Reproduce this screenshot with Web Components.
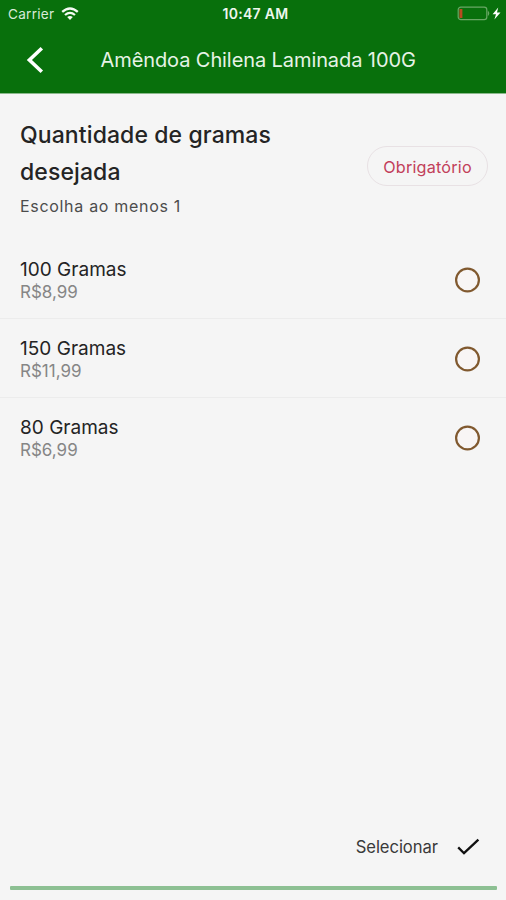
<!DOCTYPE html>
<html lang="pt-BR">
<head>
<meta charset="utf-8">
<meta name="viewport" content="width=device-width">
<title>Amêndoa Chilena Laminada 100G</title>
<style>
html,body{margin:0;height:100%}
body{background:#f5f5f5;font-family:Inter,"Liberation Sans",sans-serif;color:#242424;overflow:hidden}
</style>
</head>
<body>
<product-screen></product-screen>
<script>
const define = (name, html) => customElements.define(name, class extends HTMLElement {
  constructor() {
    super();
    this.attachShadow({mode: 'open'}).innerHTML = '<style>:host{box-sizing:border-box;white-space:nowrap}svg{display:block;flex:none}</style>' + html;
  }
});

define('status-bar', `<style>
:host{display:grid;grid-template-columns:1fr auto 1fr;align-items:center;height:27px;padding:0 5px 0 8px;color:#d8ead8;font-size:13.6px}
.left{display:flex;align-items:center;gap:7px}
.carrier{letter-spacing:.25px}
.time{font-weight:600;font-size:14px;letter-spacing:.3px;color:#eef7ee;margin-left:2px}
.right{display:flex;justify-content:flex-end}
</style>
<div class="left"><span class="carrier">Carrier</span>
<svg width="18" height="14" viewBox="0 0 18 14" fill="none" stroke="#f4fbf4" stroke-width="2.3"><path d="M1.2 4.9Q9-2 16.8 4.9M4 8Q9 3.7 14 8"/><path d="M9 13L6.2 10.1Q9 8 11.8 10.1Z" fill="#f4fbf4" stroke="none"/></svg></div>
<span class="time">10:47 AM</span>
<div class="right"><svg width="44" height="15" viewBox="0 0 44 15"><rect x="1.2" y="1.2" width="28.6" height="12.4" rx="2.6" fill="none" stroke="#69a765" stroke-width="1.2"/><path d="M2.4 3h3v9H2.4z" fill="#b74a20"/><path d="M30.8 4.6Q33.8 7.4 30.8 10.2Z" fill="#69a765"/><path d="M41.2 1.6L35.6 8.2H39L37.4 13.6L43.5 6.6H40Z" fill="#fff"/></svg></div>`);

define('nav-bar', `<style>
:host{display:flex;align-items:center;height:66px;color:#e6f3e6;padding-left:26px}
.title{font-size:20px;letter-spacing:-.09px;margin-left:56.5px}
</style>
<svg width="18" height="28" viewBox="0 0 18 28" fill="none" stroke="#fff" stroke-width="3.6"><path d="M15.8 2.3L3.4 14L15.8 25.7"/></svg>
<span class="title"><slot></slot></span>`);

define('required-pill', `<style>
:host{display:flex;align-items:center;justify-content:center;width:121px;height:40px;padding-top:1px;border:1px solid #e8e1e4;border-radius:20px;color:#c2405a;font-size:16.2px;letter-spacing:.2px}
</style><span><slot></slot></span>`);

define('group-header', `<style>
:host{display:flex;justify-content:space-between;padding:22px 18px 0 20px;height:146px}
.title{font-size:23px;line-height:37px;font-weight:500;white-space:normal;width:290px;letter-spacing:.1px;padding-top:1px}
.hint{font-size:16px;line-height:20px;margin-top:5px;letter-spacing:.69px;color:#4c4c4c}
</style>
<div><div class="title"><slot></slot></div><div class="hint"><slot name="hint"></slot></div></div>
<slot name="badge"></slot>`);

define('option-row', `<style>
:host{display:flex;align-items:center;justify-content:space-between;height:79px;padding:1px 26px 0 20px;border-bottom:1px solid #ececec}
:host(:last-of-type){border-color:transparent}
.text{padding-top:2px}
.name{font-size:19px;line-height:22px;letter-spacing:.02px}
.price{font-size:17px;line-height:22px;color:#868686}
</style>
<div class="text"><div class="name"><slot></slot></div><div class="price"><slot name="price"></slot></div></div>
<svg width="26" height="26" viewBox="0 0 26 26"><circle cx="13.5" cy="13" r="11.4" fill="#f8f5f5" stroke="#80592f" stroke-width="2.2"/></svg>`);

define('select-action', `<style>
:host{display:flex;align-items:center;justify-content:flex-end;gap:19px;padding-right:26px;height:40px;margin-top:auto;color:#3a3a3a;font-size:16.6px;letter-spacing:-.05px}
</style><span><slot></slot></span>
<svg width="23" height="18" viewBox="0 0 23 18" fill="none" stroke="#111" stroke-width="2.3"><path d="M1.2 9.4L7 15.2L21.4 1.6"/></svg>`);

define('bottom-line', `<style>
:host{display:block;height:4px;margin:19px 9px 10px 10px;background:#8dc093;border-radius:1px}
</style>`);

define('product-screen', `<style>
:host{display:flex;flex-direction:column;height:100vh;background:#f5f5f5}
header{background:#08700c;height:94px;flex:none;border-bottom:1px solid #8bb98c;box-sizing:border-box}
group-header,option-row{flex:none}
required-pill{margin-top:30px}
</style>
<header><status-bar></status-bar><nav-bar>Amêndoa Chilena Laminada 100G</nav-bar></header>
<group-header>Quantidade de gramas desejada<span slot="hint">Escolha ao menos 1</span><required-pill slot="badge">Obrigatório</required-pill></group-header>
<option-row>100 Gramas<span slot="price">R$8,99</span></option-row>
<option-row>150 Gramas<span slot="price">R$11,99</span></option-row>
<option-row>80 Gramas<span slot="price">R$6,99</span></option-row>
<select-action>Selecionar</select-action>
<bottom-line></bottom-line>`);
</script>
</body>
</html>
